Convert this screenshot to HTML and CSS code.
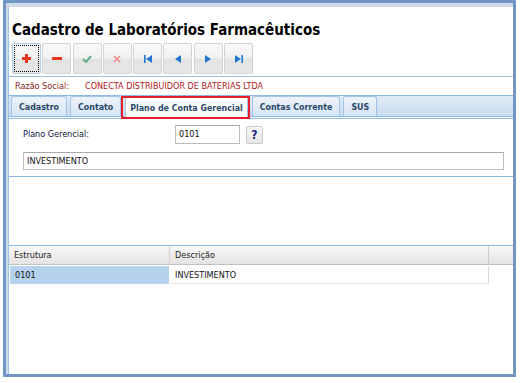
FILE: index.html
```html
<!DOCTYPE html>
<html lang="pt-BR">
<head>
  <meta charset="UTF-8">
  <title>Cadastro de Laboratórios Farmacêuticos</title>
  <link rel="stylesheet" href="styles.css">
</head>
<body>
  <div class="window">
    <div class="window-inner">
      <div class="content">

        <!-- Cabeçalho e barra de ferramentas -->
        <div class="head">
          <h1 class="title">Cadastro de Laboratórios Farmacêuticos</h1>
          <div class="toolbar">
            <button class="tool focused" title="Novo">
              <svg width="9" height="9" viewBox="0 0 9 9"><path d="M3 0h3v3h3v3h-3v3h-3v-3h-3v-3h3z" fill="#e5371d"/></svg>
            </button>
            <button class="tool" title="Excluir">
              <svg width="10" height="3" viewBox="0 0 10 3"><rect width="10" height="3" fill="#e5371d"/></svg>
            </button>
            <button class="tool" title="Gravar">
              <svg width="10" height="8" viewBox="0 0 10 8"><polyline points="1,4 4,7 9,1" fill="none" stroke="#63b086" stroke-width="2"/></svg>
            </button>
            <button class="tool" title="Cancelar">
              <svg width="8" height="8" viewBox="0 0 8 8"><path d="M1 1L7 7M7 1L1 7" stroke="#f08a8a" stroke-width="1.6"/></svg>
            </button>
            <button class="tool" title="Primeiro">
              <svg width="8" height="8" viewBox="0 0 8 8"><rect x="0" y="0" width="1.6" height="8" fill="#1f77d0"/><polygon points="8,0 8,8 2.2,4" fill="#1f77d0"/></svg>
            </button>
            <button class="tool" title="Anterior">
              <svg width="6" height="8" viewBox="0 0 6 8"><polygon points="6,0 6,8 0,4" fill="#1f77d0"/></svg>
            </button>
            <button class="tool" title="Próximo">
              <svg width="6" height="8" viewBox="0 0 6 8"><polygon points="0,0 0,8 6,4" fill="#1f77d0"/></svg>
            </button>
            <button class="tool" title="Último">
              <svg width="8" height="8" viewBox="0 0 8 8"><polygon points="0,0 0,8 5.8,4" fill="#1f77d0"/><rect x="6.4" y="0" width="1.6" height="8" fill="#1f77d0"/></svg>
            </button>
          </div>
        </div>

        <!-- Razão social -->
        <div class="razao">
          <span class="razao-label">Razão Social:</span>
          <span class="razao-value">CONECTA DISTRIBUIDOR DE BATERIAS LTDA</span>
        </div>

        <!-- Abas -->
        <div class="tabs">
          <div class="tab">Cadastro</div>
          <div class="tab">Contato</div>
          <div class="tab active">Plano de Conta Gerencial</div>
          <div class="tab">Contas Corrente</div>
          <div class="tab">SUS</div>
        </div>

        <div class="panel">
          <div class="field-row">
            <label class="field-label" for="plano">Plano Gerencial:</label>
            <input class="field code" id="plano" type="text" value="0101">
            <button class="lookup">?</button>
          </div>
          <div class="field-row">
            <input class="field wide" type="text" value="INVESTIMENTO">
          </div>
        </div>

        <!-- Grade -->
        <div class="grid">
          <div class="grid-head">Estrutura</div>
          <div class="grid-head">Descrição</div>
          <div class="grid-head last"></div>
          <div class="grid-cell selected">0101</div>
          <div class="grid-cell desc">INVESTIMENTO</div>
          <div class="grid-cell empty"></div>
        </div>

      </div>
    </div>
  </div>
</body>
</html>
```

FILE: styles.css
```css
/* Geral */
* {
  margin: 0;
  padding: 0;
  box-sizing: border-box;
}

body {
  font-family: "DejaVu Sans Condensed", "DejaVu Sans", sans-serif;
  font-stretch: condensed;
  font-size: 9px;
  color: #111;
  background-color: white;
}

/* Janela */
.window {
  margin-left: 3px;
  width: 513px;
  height: 377px;
  border: 3px solid #7196c4;
  display: flex;
}

.window-inner {
  flex: 1;
  display: flex;
  border-left: 2px solid #cfdbea;
  border-top: 4px solid #cfdbea;
}

.content {
  flex: 1;
  display: flex;
  flex-direction: column;
  border-left: 1px solid #9dc1e8;
}

/* Cabeçalho */
.head {
  padding: 14px 0 2px 3px;
}

.title {
  font-size: 15px;
  line-height: 18px;
  font-weight: bold;
  color: #000;
}

.toolbar {
  display: flex;
  gap: 1.3px;
  margin-top: 4px;
}

.tool {
  width: 29px;
  height: 31px;
  border: 1px solid #d3d3d3;
  border-radius: 2px;
  background: linear-gradient(#f8f8f8 0%, #f1f1f1 48%, #e3e3e3 52%, #e7e7e7 100%);
  display: flex;
  align-items: center;
  justify-content: center;
  position: relative;
}

.tool.focused {
  border-color: #b9cde4;
}

.tool.focused::after {
  content: "";
  position: absolute;
  inset: 1px;
  border: 1px dotted #000;
}

/* Razão social */
.razao {
  height: 19px;
  border-top: 1px solid #9dc1e8;
  padding-left: 6px;
  display: flex;
  align-items: center;
}

.razao-label {
  width: 70px;
  color: #8a1c1c;
}

.razao-value {
  color: #b0141b;
}

/* Abas */
.tabs {
  height: 22px;
  border-top: 1px solid #8db8e8;
  border-bottom: 1px solid #8db8e8;
  background: linear-gradient(#e0ebf7, #c9dcf0);
  display: flex;
  align-items: flex-end;
  gap: 3px;
  padding-left: 2px;
}

.tab {
  height: 20px;
  padding: 0 7px;
  border: 1px solid #a3c4e7;
  border-bottom: none;
  border-radius: 3px 3px 0 0;
  background: linear-gradient(#edf3fa, #d6e5f5);
  color: #2b4868;
  font-size: 8.8px;
  font-weight: bold;
  display: flex;
  align-items: center;
}

.tab.active {
  height: 22px;
  margin: 0 1px -2px;
  padding: 0 4px;
  background: white;
  position: relative;
}

.tab.active::after {
  content: "";
  position: absolute;
  left: -5px;
  right: -3px;
  top: -1px;
  bottom: -1px;
  border: 2px solid #e3202a;
}

/* Painel */
.panel {
  margin-top: 1px;
  border-top: 1px solid #8db8e8;
  border-bottom: 1px solid #8db8e8;
  padding: 5px 0 6px 14px;
  display: flex;
  flex-direction: column;
  gap: 8px;
}

.field-row {
  display: flex;
  align-items: center;
}

.field-label {
  width: 152px;
  color: #10103a;
}

.field {
  height: 19px;
  border: 1px solid #bdbdbd;
  border-top-color: #a9a9a9;
  padding: 0 3px;
  font-family: inherit;
  font-stretch: condensed;
  font-size: 9px;
  color: #111;
}

.field.code {
  width: 65px;
}

.field.wide {
  width: 481px;
  height: 18px;
}

.lookup {
  width: 17px;
  height: 18px;
  margin: 2px 0 0 6px;
  border: 1px solid #c9c9c9;
  border-radius: 2px;
  background: linear-gradient(#f7f7f7, #e4e4e4);
  color: #1b1b7e;
  font-family: inherit;
  font-size: 12px;
  font-weight: bold;
}

/* Grade */
.grid {
  margin-top: 68px;
  border-top: 1px solid #8db8e8;
  display: grid;
  grid-template-columns: 161px 319px 1fr;
}

.grid-head {
  height: 19px;
  padding-left: 5px;
  border-right: 1px solid #cfcfcf;
  border-bottom: 1px solid #c2c2c2;
  background: linear-gradient(#f8f8f8, #e5e3e1);
  color: #1a1a1a;
  display: flex;
  align-items: center;
}

.grid-head.last {
  border-right: none;
}

.grid-cell {
  height: 18px;
  margin-top: 1px;
  padding-left: 5px;
  display: flex;
  align-items: center;
}

.grid-cell.selected {
  margin-left: 1px;
  margin-right: 1px;
  background-color: #b5d3ef;
}

.grid-cell.desc {
  border-right: 1px solid #d6d6d6;
  border-bottom: 1px solid #e6e6e6;
}
```
